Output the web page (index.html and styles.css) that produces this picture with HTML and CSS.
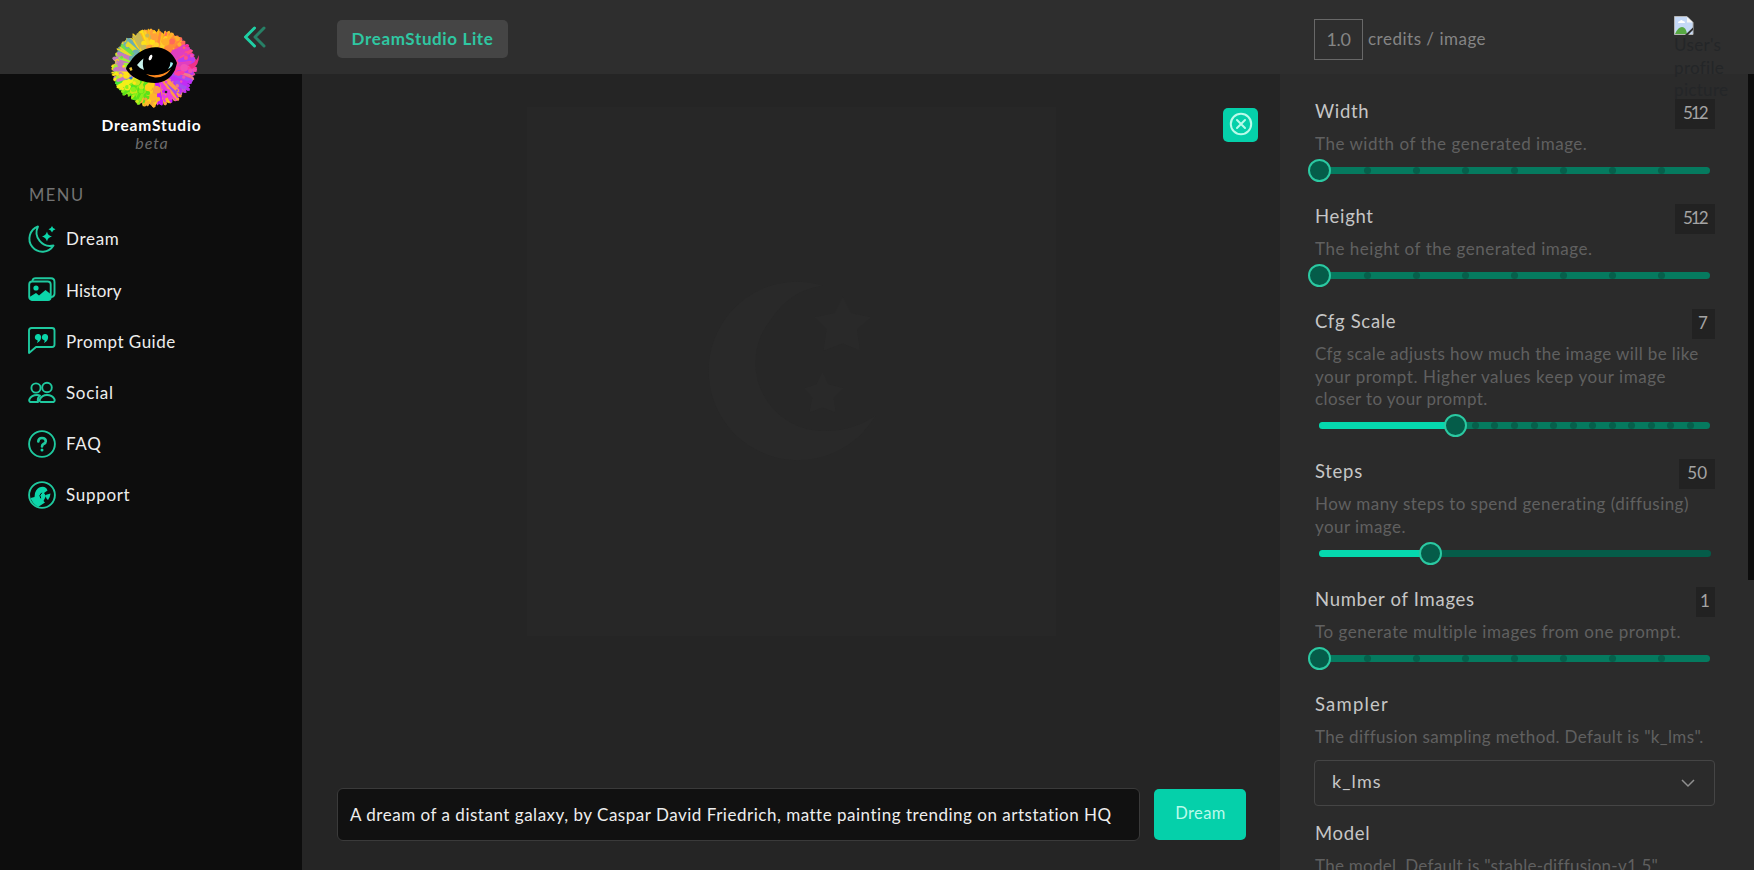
FILE: index.html
```
<!DOCTYPE html>
<html lang="en">
<head>
<meta charset="utf-8">
<title>DreamStudio</title>
<link rel="stylesheet" href="styles.css">
</head>
<body>
<div class="app">
  <aside class="sidebar">
    <div class="brand">
      <svg class="logo" viewBox="0 0 96 84" width="96" height="84">
        <g id="splash"></g>
        <path d="M18 42Q18 39 22 35C29 24 41 19 51 20.500C60 22 66 28 69 36L67 43C63 51 56 56 47 56C36 56 26 52 20 45Z" fill="#000"/>
        <path d="M29 38Q32 34 35.500 31.500Q34 38 36 43Q32 42 29 38Z" fill="#c9f5ee"/>
        <path d="M21 41L23.500 40L24.500 43L22.500 44Z" fill="#f0c43a"/>
        <path d="M60 42Q62.500 39 62.500 35L65 36Q64.500 40 60 42Z" fill="#9ff0f0"/>
        <path d="M38 47Q52 51 63 42Q57 51 47 50.500Q42 50 38 47Z" fill="#ff8a1f"/>
        <circle cx="48" cy="35" r="12.500" fill="#000"/>
        <ellipse cx="42.500" cy="30.500" rx="1.500" ry="3" fill="#fff" transform="rotate(25 42.500 30.500)"/>
      </svg>
      <div class="brand-name">DreamStudio</div>
      <div class="brand-tag">beta</div>
      <svg class="collapse" viewBox="0 0 24 24" width="24" height="24" fill="none" stroke-width="3" stroke-linecap="round" stroke-linejoin="round">
        <path d="M21 3L12 12L21 21" stroke="#278066"/><path d="M11.500 3L2.500 12L11.500 21" stroke="#1fcfa4"/>
      </svg>
    </div>
    <div class="menu-title">MENU</div>
    <nav class="menu">
      <a class="item dream"><svg viewBox="0 0 28 28"><path d="M10 1.500A13 13 0 1 0 25.500 20.500A13.500 13.500 0 0 1 10 1.500Z"/><path class="f" d="M19 6.500Q19.500 10.500 24 11.500Q19.500 12.500 19 16.500Q18 12.500 14 11.500Q18 10.500 19 6.500ZM24 1Q24.500 3.500 27.500 4.200Q24.500 5 24 7.500Q23.300 5 20.500 4.200Q23.300 3.500 24 1Z"/></svg>Dream</a>
      <a class="item history"><svg viewBox="0 0 28 28"><rect x="1.200" y="5.500" width="21.500" height="18.500" rx="3"/><path d="M4.500 4.500Q5 2.300 7.500 2.300H23Q26.500 2.300 26.500 6V17.500Q26.500 20.500 23.500 21"/><circle class="f" cx="8" cy="12" r="2.600"/><path class="f" d="M1.500 21L8 17L11 19.500L17.500 14L22.500 18V23Q22 24.500 20 24.500H4Q1.500 24.500 1.500 21Z"/></svg>History</a>
      <a class="item guide"><svg viewBox="0 0 28 28"><path d="M1 26V3.500Q1 1 3.500 1H24Q26.500 1 26.500 3.500V17.500Q26.500 20 24 20H8Z"/><path class="f" d="M10.500 7A3.100 3.100 0 1 0 9.500 13.200Q10 14.500 8.800 16Q14 13.500 13 9Q12.200 7 10.500 7ZM17.500 7A3.100 3.100 0 1 0 16.500 13.200Q17 14.500 15.800 16Q21 13.500 20 9Q19.200 7 17.500 7Z"/></svg>Prompt Guide</a>
      <a class="item social"><svg viewBox="0 0 28 28"><circle cx="8" cy="9" r="4.600"/><circle cx="19" cy="8.500" r="4.800"/><path d="M10 23H2.500Q.8 22.500 1.300 20.500Q3.500 16 9 16Q11 16 12 16.500Q9 19 10 23M13 23Q11.200 22.500 11.800 20.500Q14 16 19 16Q24.500 16 26.600 20.500Q27 22.500 25.500 23Z"/></svg>Social</a>
      <a class="item faq"><svg viewBox="0 0 28 28"><circle cx="14" cy="14" r="12.900"/><path stroke-width="2.600" d="M10.300 11.500Q10.300 8 14 8Q17.800 8 17.800 11.200Q17.800 13 15.500 14Q14 14.800 14 16.500"/><circle class="f" cx="14" cy="20" r="1.500"/></svg>FAQ</a>
      <a class="item support"><svg viewBox="0 0 28 28"><circle cx="14" cy="14" r="12.900"/><path class="f" d="M7 12Q9 6.500 13 6Q18 5 19.500 9.500L16 12L18 15L15.500 20L17 21.500L10 26Q4 22 2.500 17L6.500 16Z"/><path class="f" d="M17.500 14L22.500 12.500Q22 17 20 19Q18 18 17.500 14Z"/><path d="M13.500 12Q10.500 14 12.500 17" stroke="#0d0d0d" stroke-width="1"/></svg>Support</a>
    </nav>
  </aside>

  <header class="topbar">
    <div class="tab">DreamStudio Lite</div>
    <div class="credits"><span class="credit-box">1.0</span><span class="credit-label">credits / image</span></div>
    <div class="avatar">
      <svg viewBox="0 0 20 20" width="20" height="20"><path d="M.5 .5H13L19 6.500V18.500H.5Z" fill="#c5d9f7" stroke="#b5b5b5"/><path d="M1 18Q4 11 8 11Q12 11 13 18Z" fill="#57a843"/><path d="M4 7Q4 5 6 5Q7 3 9 5Q11 5 11 7Z" fill="#fff"/><path d="M13 1V6.500H19Z" fill="#f5f5f5"/><path d="M11 19L19 11.500V14L14 19Z" fill="#2e2e2e"/></svg>
      <span>User's<br>profile<br>picture</span>
    </div>
  </header>

  <main class="stage">
    <div class="preview">
      <svg viewBox="0 13 260 260" width="264" height="264" fill="#292929"><path d="M160 58Q145 53 125 54.500A88 88 0 1 0 212 186Q190 201 163 201A67 67 0 0 1 108 93Q128 62 160 58Z"/><path transform="translate(-3 0)" d="M183 69L191 85L211 89L197 101L200 122L183 115L164 122L167 101L155 89L175 85ZM163 143L169 155L184 159L174 168L176 183L163 178L150 183L153 168L145 159L157 155Z"/></svg>
    </div>
    <button class="close"><svg viewBox="0 0 24 24" width="24" height="24" fill="none" stroke="#b9fbea" stroke-width="2" stroke-linecap="round"><circle cx="12" cy="12" r="10.200"/><path d="M8 8L16 16M16 8L8 16"/></svg></button>
    <div class="prompt-row">
      <div class="prompt">A dream of a distant galaxy, by Caspar David Friedrich, matte painting trending on artstation HQ</div>
      <button class="go">Dream</button>
    </div>
  </main>

  <section class="settings">
    <div class="field"><div class="head"><h2>Width</h2><b class="tight">512</b></div><p>The width of the generated image.</p><div class="slider" data-steps="8" data-value="0"></div></div>
    <div class="field"><div class="head"><h2>Height</h2><b class="tight">512</b></div><p>The height of the generated image.</p><div class="slider" data-steps="8" data-value="0"></div></div>
    <div class="field"><div class="head"><h2>Cfg Scale</h2><b class="seven">7</b></div><p class="cfg">Cfg scale adjusts how much the image will be like<br><span>your prompt. Higher values keep your image</span><br>closer to your prompt.</p><div class="slider" data-steps="20" data-value="0.35"></div></div>
    <div class="field"><div class="head"><h2>Steps</h2><b>50</b></div><p class="steps">How many steps to spend generating (diffusing)<br>your image.</p><div class="slider plain" data-steps="0" data-value="0.286"></div></div>
    <div class="field"><div class="head"><h2>Number of Images</h2><b class="one">1</b></div><p>To generate multiple images from one prompt.</p><div class="slider" data-steps="8" data-value="0"></div></div>
    <div class="field"><div class="head"><h2 class="sampler">Sampler</h2></div><p class="method">The diffusion sampling method. Default is "k_lms".</p>
      <div class="select"><span>k_lms</span><svg viewBox="0 0 14 10" width="14" height="10" fill="none" stroke="#909090" stroke-width="1.500"><path d="M1 2L7 8L13 2"/></svg></div></div>
    <div class="field"><div class="head"><h2>Model</h2></div><p class="model">The model. Default is "stable-diffusion-v1.5"</p></div>
  </section>
  <div class="scroll"></div>
</div>
<script src="main.js"></script>
</body>
</html>
```
FILE: styles.css
```
* { box-sizing: border-box; }
body { margin: 0; overflow: hidden; font: 17px/22.5px Lato, sans-serif; color: #eee; background: #252525; }
button { border: 0; font-family: inherit; }
.app { position: relative; display: grid; grid-template-columns: 302px 978px 474px; grid-template-rows: 74px 796px; width: 1754px; height: 870px; overflow: hidden; }

.sidebar { grid-column: 1; grid-row: 1 / 3; z-index: 1; background: linear-gradient(#2e2e2e 74px, #0d0d0d 74px); }
.brand { position: relative; display: flex; flex-direction: column; align-items: center; height: 184px; padding-top: 27px; }
.logo { margin-left: 9px; overflow: visible; }
.brand-name { margin: 4px 0 0 1px; height: 19px; font-size: 15.500px; line-height: 20px; font-weight: 700; letter-spacing: .85px; color: #fff; }
.brand-tag { margin: -1px 0 0 2px; font-size: 16px; line-height: 19px; font-style: italic; font-weight: 400; letter-spacing: .9px; color: #6c6c6c; }
.collapse { position: absolute; left: 243px; top: 24.500px; }
.menu-title { padding-left: 29px; font-size: 16.500px; line-height: 23.500px; letter-spacing: 1.500px; color: #737373; }
.menu { display: flex; flex-direction: column; padding: 6.500px 0 0 28px; }
.item { display: flex; align-items: center; gap: 10px; height: 51.200px; letter-spacing: .7px; }
.item svg { width: 28px; height: 28px; margin-top: -1px; fill: none; stroke: #1fc99f; stroke-width: 1.900; stroke-linecap: round; stroke-linejoin: round; overflow: visible; }
.item .f { fill: #0bd6aa; stroke: none; }
.history { letter-spacing: .1px; }
.guide { letter-spacing: .5px; }

.topbar { grid-column: 2 / 4; grid-row: 1; z-index: 2; display: flex; align-items: flex-start; background: #2e2e2e; }
.tab { margin: 20px 0 0 35px; width: 171px; height: 38px; border-radius: 5px; background: #454545; color: #2fc7a2; font-weight: 700; line-height: 37px; text-align: center; letter-spacing: .62px; }
.credits { display: flex; align-items: center; margin: 19px 0 0 806px; height: 41px; color: #858585; }
.credit-box { width: 49px; height: 41px; border: 1px solid #686868; font-size: 18px; line-height: 39px; text-align: center; letter-spacing: -.3px; }
.credit-label { margin: -1px 0 0 5px; letter-spacing: .5px; }
.avatar { display: flex; flex-direction: column; align-items: flex-start; margin: 16px 0 0 188px; width: 60px; height: 83px; overflow: hidden; color: #242628; letter-spacing: .3px; }
.avatar svg { flex: none; }
.avatar span { flex: none; margin-top: -2px; }

.stage { position: relative; grid-column: 2; grid-row: 2; display: flex; flex-direction: column; justify-content: space-between; align-items: center; padding: 33px 34px 29px 35px; background: #252525; }
.preview { display: flex; align-items: center; justify-content: center; width: 529px; height: 529px; background: #272727; }
.close { position: absolute; right: 22px; top: 34px; width: 35px; height: 34px; padding: 0 0 2px; display: grid; place-items: center; border-radius: 5px; background: #05d0aa; }
.prompt-row { display: flex; align-items: flex-start; gap: 14px; align-self: stretch; }
.prompt { width: 803px; height: 53px; padding-left: 12px; border: 1px solid #3a3a3a; border-radius: 6px; background: #111; line-height: 52px; letter-spacing: .515px; white-space: nowrap; }
.go { width: 92px; height: 51px; margin-top: 1px; border-radius: 5px; background: #05d0aa; color: #b9fbea; font-size: 16.500px; line-height: 46px; padding: 0 0 3px 1px; letter-spacing: .4px; }

.settings { grid-column: 3; grid-row: 2; padding: 25px 39px 0 34px; background: #2b2b2b; overflow: hidden; }
.field { color: #606060; }
.head { display: flex; justify-content: space-between; height: 34px; }
h2 { margin: 0 0 0 1px; font-size: 18.500px; font-weight: 400; line-height: 25px; letter-spacing: .7px; color: #c6c6c6; }
.sampler { letter-spacing: 1.200px; }
.head b { height: 30px; padding: 0 8px; font-size: 17px; font-weight: 400; line-height: 27px; background: #222; color: #a4a4a4; }
.head .tight { width: 40px; letter-spacing: -2px; }
.head .seven { width: 23px; padding: 0 6px; }
.head .one { width: 19px; padding: 0 4px; }
p { margin: 0 0 0 1px; letter-spacing: .52px; white-space: nowrap; }
.cfg { letter-spacing: .38px; }
.cfg span { letter-spacing: .56px; }
.steps { letter-spacing: .44px; }
.method { letter-spacing: .35px; }
.model { letter-spacing: .28px; }
.slider { position: relative; height: 48.600px; margin: 0 5px 0 5px; }
.track { position: absolute; left: 0; right: 0; top: 11.500px; height: 7px; border-radius: 4px; background: #057a5f; overflow: hidden; }
.plain .track { background: #055c49; right: -1px; }
.fill { position: absolute; left: 0; top: 0; height: 7px; background: #05d8ae; z-index: 1; }
.mark { position: absolute; top: 0; width: 7px; height: 7px; margin-left: -3.500px; border-radius: 50%; background: #065f4b; }
.thumb { position: absolute; top: 3.500px; width: 23px; height: 23px; margin-left: -11.500px; border: 2px solid #2bc9a2; border-radius: 50%; background: #055c49; z-index: 2; }
.select { display: flex; align-items: center; justify-content: space-between; height: 46px; margin: 12px 0 15px; padding: 0 19px 4px 17px; border: 1px solid #454545; border-radius: 4px; color: #c6c6c6; font-size: 18px; letter-spacing: 1.100px; }
.select svg { margin-top: 3px; }
.scroll { position: absolute; right: 0; top: 74px; width: 6px; height: 506px; background: #0d0d0d; }
```
FILE: main.js
```
// Sliders: fill, tick marks and thumb from each slider's data.
document.querySelectorAll('.slider').forEach(function (slider) {
  var steps = +slider.dataset.steps, value = +slider.dataset.value;
  var html = '<div class="track"><div class="fill" style="width:' + value * 100 + '%"></div>';
  for (var i = 1; i < steps; i++) html += '<i class="mark" style="left:' + (i / steps) * 100 + '%"></i>';
  slider.innerHTML = html + '</div><div class="thumb" style="left:' + value * 100 + '%"></div>';
});

// Paint splash behind the eye: strokes and blobs whose colour depends on angle.
var seed = 7;
function rnd() { seed = (seed * 16807) % 2147483647; return seed / 2147483647; }
var palettes = [
  ['#b93df0', '#ff3fa0', '#f04fb8'], ['#c22cf5', '#a64df0', '#f07a8a'], ['#c81cff', '#ff9a4a', '#e83ce0'],
  ['#ffd21a', '#f0a83a', '#ffb52a'], ['#5be31a', '#c8e81a', '#8af01a'], ['#ffe51a', '#46e83a', '#f2f01a'],
  ['#ffe01a', '#c77ac0', '#9df03a'], ['#6fe04a', '#6dafb0', '#e8dc2a'], ['#ffd61a', '#c8b858', '#ffe01a'],
  ['#ffb81a', '#ffcf2a', '#ff9f3a'], ['#ff8a3a', '#ff6a5a', '#ffb02a'], ['#ff2f8f', '#ff4f8a', '#e03fc0']
];
function colour(a) { return palettes[Math.floor(a / (Math.PI / 6) + rnd() * 0.8) % 12][Math.floor(rnd() * 3)]; }
var out = '';
for (var n = 0; n < 520; n++) {
  var a = rnd() * Math.PI * 2, r = 34 + rnd() * 8, w = 1.4 + rnd() * 2;
  var c = Math.cos(a), s = Math.sin(a) * 0.92;
  var x = 46 + c * r, y = 41 + s * r, bx = 46 + c * 12, by = 41 + s * 12;
  out += '<path d="M' + (bx - s * w).toFixed(1) + ' ' + (by + c * w).toFixed(1) + 'L' + (x - s * w * 0.6).toFixed(1) + ' ' + (y + c * w * 0.6).toFixed(1) + 'L' + (x + c * 1.5).toFixed(1) + ' ' + (y + s * 1.5).toFixed(1) + 'L' + (x + s * w * 0.6).toFixed(1) + ' ' + (y - c * w * 0.6).toFixed(1) + 'L' + (bx + s * w).toFixed(1) + ' ' + (by - c * w).toFixed(1) + 'Z" fill="' + colour(a) + '"/>';
}
for (n = 0; n < 150; n++) {
  a = rnd() * Math.PI * 2; r = 18 + rnd() * 23;
  out += '<circle cx="' + (46 + Math.cos(a) * r).toFixed(1) + '" cy="' + (41 + Math.sin(a) * r * 0.92).toFixed(1) + '" r="' + (0.8 + rnd() * (r > 34 ? 1.6 : 3)).toFixed(1) + '" fill="' + colour(a) + '"/>';
}
out += '<path d="M80 38Q88 36 91 28Q91 39 84 42Z" fill="#f0308a"/><circle cx="58" cy="65" r="1.3" fill="#222"/><circle cx="23" cy="51" r="1.6" fill="#2a7ad0"/>';
document.getElementById('splash').innerHTML = out;
```
